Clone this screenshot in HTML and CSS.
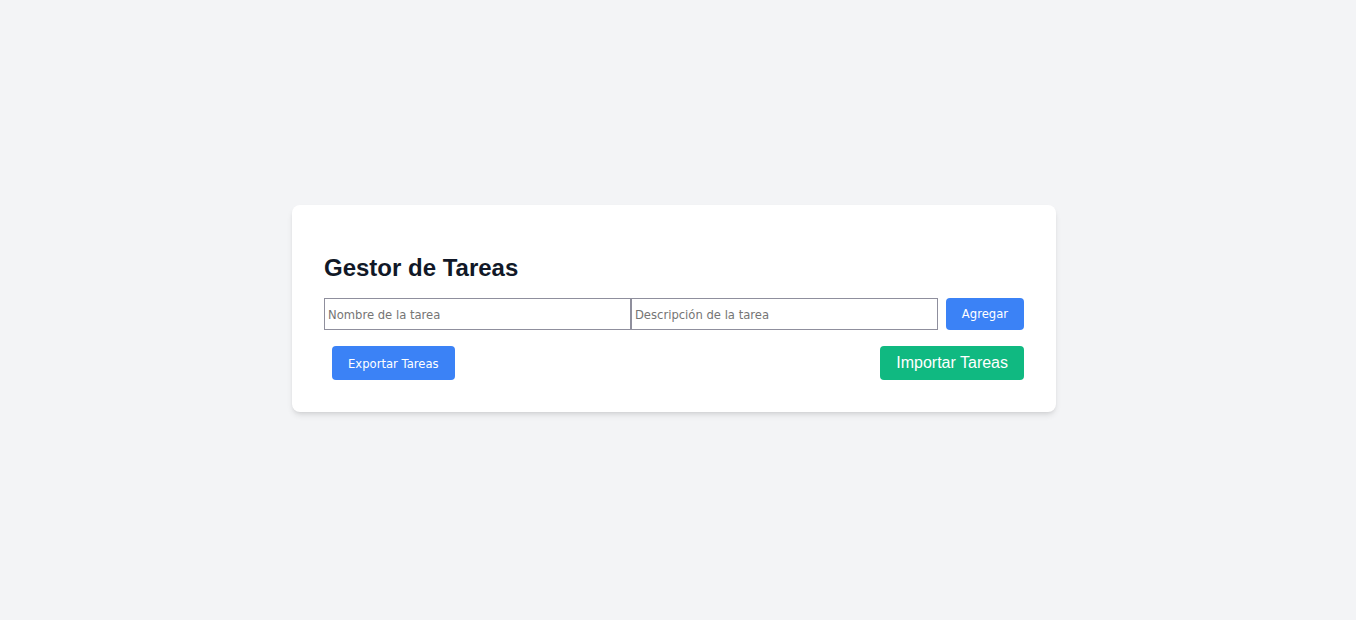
FILE: index.html
```html
<!DOCTYPE html>
<html lang="es">
<head>
<meta charset="utf-8">
<title>Gestor de Tareas</title>
<link rel="stylesheet" href="styles.css">
</head>
<body>
<div class="page">
  <div class="card">
    <h1 class="title">Gestor de Tareas</h1>
    <div class="form-row">
      <input class="field" type="text" placeholder="Nombre de la tarea">
      <input class="field" type="text" placeholder="Descripción de la tarea">
      <button class="btn btn-blue btn-add">Agregar</button>
    </div>
    <div class="actions">
      <button class="btn btn-blue btn-export">Exportar Tareas</button>
      <button class="btn btn-green btn-import">Importar Tareas</button>
    </div>
  </div>
</div>
</body>
</html>
```
FILE: styles.css
```css
html, body {
  margin: 0;
  padding: 0;
  background: #f3f4f6;
}
.page {
  min-height: 620px;
  box-sizing: border-box;
  display: flex;
  align-items: center;
  justify-content: center;
  padding-right: 8px;
  padding-bottom: 3px;
}
.card {
  width: 764px;
  box-sizing: border-box;
  background: #ffffff;
  border-radius: 8px;
  padding: 32px;
  box-shadow: 0 4px 6px -1px rgba(0,0,0,0.1), 0 2px 4px -2px rgba(0,0,0,0.1);
}
.title {
  margin: 17px 0 16px 0;
  font-family: "Liberation Sans", Arial, sans-serif;
  font-size: 24px;
  line-height: 28px;
  font-weight: 700;
  color: #111827;
}
.form-row {
  display: flex;
  align-items: stretch;
}
.field {
  flex: 1;
  min-width: 0;
  height: 32px;
  box-sizing: border-box;
  margin: 0;
  padding: 1px 3px 0 3px;
  border: 1px solid #8f8f9d;
  border-radius: 0;
  font-family: "DejaVu Sans", Verdana, sans-serif;
  font-size: 11.6px;
  color: #111;
  background: #fff;
}
.field::placeholder {
  color: #757575;
}
.btn {
  border: none;
  border-radius: 4px;
  padding: 0 16px;
  color: #ffffff;
  cursor: pointer;
  font-family: "DejaVu Sans", Verdana, sans-serif;
  font-size: 11.6px;
}
.btn-blue {
  background: #3b82f6;
}
.btn-green {
  background: #10b981;
}
.btn-add {
  margin-left: 8px;
  height: 32px;
}
.actions {
  margin-top: 16px;
  display: flex;
  justify-content: space-between;
  align-items: center;
}
.btn-export {
  margin-left: 8px;
  height: 34px;
  padding-top: 1px;
}
.btn-import {
  height: 34px;
  font-family: "Liberation Sans", Arial, sans-serif;
  font-size: 16px;
}
```
